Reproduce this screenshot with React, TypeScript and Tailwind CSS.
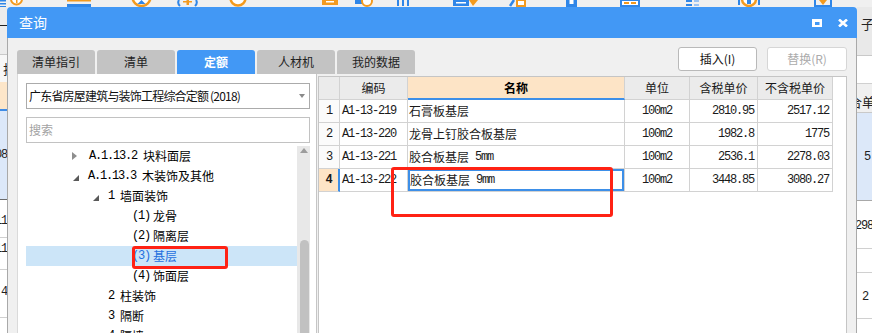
import React from "react";

const M = ({ children, className = "" }: { children: React.ReactNode; className?: string }) => (
  <span className={"font-['Liberation_Mono',monospace] tracking-[-1.2px] " + className}>{children}</span>
);

function Toolbar() {
  const o = "#f39a1e";
  const b = "#2f86e8";
  return (
    <div className="h-[7px] flex items-start overflow-hidden bg-[#f0f0f0]">
      <svg width="6" height="7">
        <rect x="0" y="0" width="6" height="1.5" fill={b} />
        <rect x="0" y="3" width="6" height="1.5" fill={b} />
        <rect x="0" y="6" width="6" height="1.5" fill={b} />
      </svg>
      <svg className="ml-[4px]" width="13" height="7">
        <circle cx="6.5" cy="-1" r="5.5" fill="#fff" stroke={o} strokeWidth="2" />
        <rect x="6" y="0" width="1.5" height="3" fill={o} />
      </svg>
      <svg className="ml-[44px]" width="24" height="7">
        <rect x="0" y="0" width="24" height="1.5" fill={o} />
        <rect x="0" y="4" width="24" height="3" fill={b} />
      </svg>
      <svg className="ml-[39px]" width="23" height="7">
        <circle cx="11.5" cy="-3" r="9" fill="#fff" stroke={o} strokeWidth="2.5" />
        <path d="M7.5 4 L11.5 0 L15.5 4 Z" fill={b} />
      </svg>
      <svg className="ml-[23px]" width="23" height="7">
        <path d="M3 0 Q1 3 4 6" stroke={b} strokeWidth="2" fill="none" />
        <path d="M20 0 Q22 3 19 6" stroke={b} strokeWidth="2" fill="none" />
        <rect x="10.5" y="0" width="2.5" height="5" fill={o} />
        <rect x="7" y="1" width="9" height="1.5" fill={o} />
      </svg>
      <svg className="ml-[29px]" width="20" height="7">
        <circle cx="10" cy="-2" r="7.5" fill="#fff" stroke={o} strokeWidth="2.5" />
      </svg>
      <svg className="ml-[72px]" width="20" height="7">
        <rect x="2" y="0" width="16" height="5" fill={o} />
        <rect x="6" y="1" width="8" height="1.5" fill="#fff" />
      </svg>
      <svg className="ml-[15px]" width="20" height="7">
        <rect x="0" y="0" width="8" height="4" fill={b} />
        <circle cx="12" cy="1" r="5" fill="#fff" stroke={o} strokeWidth="2" />
      </svg>
      <svg className="ml-[20px]" width="17" height="7">
        <rect x="2" y="0" width="2" height="6" fill={b} />
        <rect x="7" y="0" width="2" height="6" fill={b} />
        <rect x="12" y="0" width="2" height="6" fill={b} />
      </svg>
      <svg className="ml-[41px]" width="25" height="7">
        <rect x="0" y="0" width="16" height="6" fill={b} />
        <rect x="3" y="2" width="10" height="1.5" fill="#fff" />
        <path d="M16 0 L25 0 L20 6 Z" fill={o} />
      </svg>
      <svg className="ml-[30px]" width="19" height="7">
        <path d="M2 6 L6 0" stroke={b} strokeWidth="2.5" />
        <rect x="9" y="0" width="8" height="6" fill="#fff" stroke={o} strokeWidth="2" />
      </svg>
      <svg className="ml-[38px]" width="13" height="7">
        <rect x="1" y="0" width="11" height="7" fill={b} />
        <rect x="4.5" y="0" width="4" height="4" fill="#fff" />
      </svg>
      <svg className="ml-[42px]" width="20" height="7">
        <rect x="1" y="0" width="18" height="6" fill="#fff" stroke={b} strokeWidth="2" />
        <rect x="4" y="2" width="5" height="2" fill={o} />
        <rect x="11" y="2" width="5" height="2" fill={o} />
      </svg>
      <svg className="ml-[45px]" width="15" height="7">
        <rect x="1" y="0" width="6" height="2" fill={b} />
        <rect x="1" y="4" width="6" height="2" fill={b} />
        <rect x="9" y="0" width="5" height="2" fill="#9cc3f2" />
        <rect x="9" y="4" width="5" height="2" fill="#9cc3f2" />
      </svg>
      <svg className="ml-[38px]" width="22" height="7">
        <circle cx="11" cy="-1" r="7" fill="#fff" stroke={o} strokeWidth="2.5" />
        <rect x="9" y="0" width="4" height="4" fill={b} />
        <rect x="0" y="0" width="2" height="5" fill={b} />
        <rect x="20" y="0" width="2" height="5" fill={b} />
      </svg>
      <svg className="ml-[53px]" width="20" height="7">
        <path d="M2 0 L2 6 L18 6 L18 0" stroke={b} strokeWidth="2" fill="none" />
        <path d="M6 0 L10 5 L14 0 Z" fill={o} />
      </svg>
    </div>
  );
}

function LeftStrip() {
  return (
    <div className="w-[7px] flex flex-col overflow-hidden text-[13px] leading-[16px] text-[#222]">
      <div className="h-[48px] shrink-0 bg-[#ececec] border-b border-[#c9c9c9] pt-[10px] flex">
        <span className="ml-[-3px]">一</span>
      </div>
      <div className="h-[27px] shrink-0 bg-[#f7f7f7] flex items-center">
        <span className="ml-[3px]">折</span>
      </div>
      <div className="h-[27px] shrink-0 bg-[#fde6c9]" />
      <div className="h-[2px] shrink-0 bg-[#3f8ce6]" />
      <div className="h-[89px] shrink-0 bg-[#dce8f9] border-b border-[#6b6b6b] flex items-center justify-end whitespace-nowrap">
        <M className="text-[12px] leading-[14px]">1308</M>
      </div>
      <div className="h-[38px] shrink-0 bg-white border-b border-[#d0d0d0] flex justify-end pt-[14px] whitespace-nowrap">
        <M className="text-[12px] leading-[14px]">11</M>
      </div>
      <div className="h-[32px] shrink-0 bg-white border-b border-[#d0d0d0] flex justify-end pt-[4px] whitespace-nowrap">
        <M className="text-[12px] leading-[14px]">11</M>
      </div>
      <div className="h-[48px] shrink-0 bg-white border-b border-[#d0d0d0] flex justify-end pt-[15px] whitespace-nowrap">
        <M className="text-[12px] leading-[14px]">4</M>
      </div>
      <div className="flex-1 bg-white" />
    </div>
  );
}

function RightStrip() {
  return (
    <div className="w-[15px] flex flex-col overflow-hidden text-[13px] leading-[16px] text-[#222]">
      <div className="h-[49px] shrink-0 bg-[#e9e9e9] border-b border-[#c9c9c9] pt-[9px] pl-[4px]">子</div>
      <div className="h-[28px] shrink-0 bg-white border-b border-[#d0d0d0]" />
      <div className="h-[29px] shrink-0 bg-[#f0f0f0] border-b border-[#c9c9c9] pt-[10px] flex whitespace-nowrap">
        <span className="ml-[-8px]">合单</span>
      </div>
      <div className="h-[88px] shrink-0 bg-[#dce8f9] border-b border-[#a8a8a8] flex items-center pl-[7px]">
        <M className="text-[12px] leading-[14px]">5</M>
      </div>
      <div className="h-[48px] shrink-0 bg-white border-b border-[#d0d0d0] flex pt-[18px] whitespace-nowrap">
        <M className="text-[12px] leading-[14px] ml-[-2px]">298</M>
      </div>
      <div className="h-[24px] shrink-0 bg-white border-b border-[#d0d0d0]" />
      <div className="h-[46px] shrink-0 bg-white border-b border-[#d0d0d0] pt-[14px] pl-[5px]">
        <M className="text-[12px] leading-[14px]">2</M>
      </div>
      <div className="flex-1 bg-white" />
    </div>
  );
}

type TreeRow = { pl: string; arrow?: "right" | "down"; num: string; text: string; gap: string; sel?: boolean };

const tree: TreeRow[] = [
  { pl: "pl-[47px]", arrow: "right", num: "A.1.13.2", text: "块料面层", gap: "gap-[6px]" },
  { pl: "pl-[47px]", arrow: "down", num: "A.1.13.3", text: "木装饰及其他", gap: "gap-[6px]" },
  { pl: "pl-[67px]", arrow: "down", num: "1", text: "墙面装饰", gap: "gap-[6px]" },
  { pl: "pl-[106px]", num: "(1)", text: "龙骨", gap: "gap-[3px]" },
  { pl: "pl-[106px]", num: "(2)", text: "隔离层", gap: "gap-[3px]" },
  { pl: "pl-[106px]", num: "(3)", text: "基层", gap: "gap-[3px]", sel: true },
  { pl: "pl-[106px]", num: "(4)", text: "饰面层", gap: "gap-[3px]" },
  { pl: "pl-[82px]", num: "2", text: "柱装饰", gap: "gap-[6px]" },
  { pl: "pl-[82px]", num: "3", text: "隔断", gap: "gap-[6px]" },
  { pl: "pl-[82px]", num: "4", text: "隔墙", gap: "gap-[6px]" },
];

function Arrow({ dir }: { dir: "right" | "down" }) {
  if (dir === "right")
    return (
      <svg width="5" height="8" className="ml-[-1px]">
        <path d="M0 0 L5 4 L0 8 Z" fill="#8e8e8e" />
      </svg>
    );
  return (
    <svg width="6" height="6" className="mt-[4px]">
      <path d="M6 0 L6 6 L0 6 Z" fill="#595959" />
    </svg>
  );
}

function LeftPanel() {
  return (
    <div className="relative w-[300px] shrink-0 bg-white border-l border-[#dadada] border-r border-r-[#c5c5c5] pl-[8px] pt-[9px]">
      <div className="w-[284px] h-[26px] border border-[#ababab] flex items-center justify-between pl-[2px] pr-[4px]">
        <span className="text-[12px] tracking-[-0.8px] text-[#111] whitespace-nowrap">广东省房屋建筑与装饰工程综合定额 (2018)</span>
        <svg width="6" height="4">
          <path d="M0 0 L6 0 L3 4 Z" fill="#8a8a8a" />
        </svg>
      </div>
      <div className="mt-[8px] w-[284px] h-[26px] border border-[#c2c2c2] flex items-center pl-[2px]">
        <span className="text-[12px] text-[#a3a3a3]">搜索</span>
      </div>
      <div className="mt-[3px] w-[284px] flex">
        <div className="w-[271px] flex flex-col">
          {tree.map((r, i) => (
            <div key={i} className={"h-[20px] flex items-center " + r.pl + (r.sel ? " bg-[#cce5f8]" : "")}>
              {r.arrow && (
                <div className={(r.arrow === "right" ? "w-[16px]" : "w-[15px]") + " flex items-center"}>
                  <Arrow dir={r.arrow} />
                </div>
              )}
              <div className={"flex items-center text-[12px] leading-[14px] " + r.gap + (r.sel ? " text-[#1f6fde]" : " text-black")}>
                <M>{r.num}</M>
                <span>{r.text}</span>
              </div>
            </div>
          ))}
        </div>
        <div className="w-[13px] h-[200px] bg-[#e8e8e8] flex flex-col items-center">
          <svg width="8" height="5" className="mt-[2px] ml-[1px]">
            <path d="M0 5 L4 0 L8 5 Z" fill="#9c9c9c" />
          </svg>
          <div className="mt-[87px] ml-[1px] w-[9px] flex-1 bg-[#c1c1c1] rounded-t-[5px]" />
        </div>
      </div>
      <div className="absolute left-[114px] top-[172px] w-[96px] h-[23px] border-[3px] border-[#ff2214] rounded-[3px]" />
    </div>
  );
}

type Row = { n: string; code: string; name: string; mm?: string; unit: string; p1: string; p2: string; sel?: boolean };
const rows: Row[] = [
  { n: "1", code: "A1-13-219", name: "石膏板基层", unit: "100m2", p1: "2810.95", p2: "2517.12" },
  { n: "2", code: "A1-13-220", name: "龙骨上钉胶合板基层", unit: "100m2", p1: "1982.8", p2: "1775" },
  { n: "3", code: "A1-13-221", name: "胶合板基层", mm: "5mm", unit: "100m2", p1: "2536.1", p2: "2278.03" },
  { n: "4", code: "A1-13-222", name: "胶合板基层", mm: "9mm", unit: "100m2", p1: "3448.85", p2: "3080.27", sel: true },
];

function RightPanel() {
  const cell = "h-[23px] border-r border-b border-[#d2d2d2] flex items-center text-[12px] leading-[14px] overflow-hidden whitespace-nowrap";
  return (
    <div className="relative flex-1 mt-[2px] bg-white border border-[#c5c5c5]">
      <div className="grid grid-cols-[21px_68px_217px_65px_68px_75px] w-[514px] text-[#1a1a1a]">
        <div className={cell + " bg-[#ebebeb]"} />
        <div className={cell + " bg-[#ebebeb] justify-center"}>编码</div>
        <div className={cell + " bg-[#fde4c6] justify-center font-bold text-black border-b-2 border-b-[#3d8fe8]"}>名称</div>
        <div className={cell + " bg-[#ebebeb] justify-center"}>单位</div>
        <div className={cell + " bg-[#ebebeb] justify-center"}>含税单价</div>
        <div className={cell + " bg-[#ebebeb] justify-center"}>不含税单价</div>
        {rows.map((r) => (
          <React.Fragment key={r.n}>
            <div className={cell + " justify-center " + (r.sel ? "bg-[#fde4c6] font-bold border-r-2 border-r-[#3d8fe8]" : "bg-[#fbfbfb]")}>
              <M>{r.n}</M>
            </div>
            <div className={cell + " pl-[2px]"}>
              <M>{r.code}</M>
            </div>
            <div className={cell + " pl-[1px] " + (r.sel ? "shadow-[inset_0_0_0_2px_#3d8fe8] pl-[2px]" : "")}>
              <span>{r.name}</span>
              {r.mm && <M className="ml-[6px]">{r.mm}</M>}
            </div>
            <div className={cell + " justify-center"}>
              <M>{r.unit}</M>
            </div>
            <div className={cell + " justify-end pr-[3px]"}>
              <M>{r.p1}</M>
            </div>
            <div className={cell + " justify-end pr-[3px]"}>
              <M>{r.p2}</M>
            </div>
          </React.Fragment>
        ))}
      </div>
      <div className="absolute left-[72px] top-[90px] w-[222px] h-[50px] border-[3px] border-[#ff2214] rounded-[3px]" />
    </div>
  );
}

function Dialog() {
  const tabs = ["清单指引", "清单", "定额", "人材机", "我的数据"];
  return (
    <div className="w-[850px] shrink-0 flex flex-col">
      <div className="h-[31px] shrink-0 bg-[#4298f5] rounded-t-[4px] flex items-center justify-between pl-[12px] pr-[9px]">
        <span className="text-[14px] text-white">查询</span>
        <div className="flex items-center gap-[16px]">
          <svg width="10" height="8">
            <path d="M0 0 H10 V8 H0 Z M3 3 V6 H7.5 V3 Z" fill="#fff" fillRule="evenodd" />
          </svg>
          <svg width="10" height="8">
            <path d="M1 0.5 L9 7.5 M9 0.5 L1 7.5" stroke="#fff" strokeWidth="2.6" />
          </svg>
        </div>
      </div>
      <div className="flex-1 flex flex-col bg-[#f0f0f0] border-x border-[#a9a9a9]">
        <div className="flex items-start justify-between pt-[9px] pl-[9px] pr-[9px]">
          <div className="flex gap-[2px] mt-[3px]">
            {tabs.map((t) => (
              <div
                key={t}
                className={
                  "w-[78px] h-[24px] rounded-t-[3px] flex items-center justify-center text-[12px] " +
                  (t === "定额" ? "bg-[#4298f5] text-white font-bold" : "bg-[#c3c3c3] text-[#222]")
                }
              >
                {t}
              </div>
            ))}
          </div>
          <div className="flex gap-[10px]">
            <div className="w-[79px] h-[24px] bg-white border border-[#b9b9b9] rounded-[3px] flex items-center justify-center text-[12px] text-[#111]">
              插入(I)
            </div>
            <div className="w-[80px] h-[24px] bg-white border border-[#d6d6d6] rounded-[3px] flex items-center justify-center text-[12px] text-[#ababab]">
              替换(R)
            </div>
          </div>
        </div>
        <div className="flex-1 flex gap-[1px] pl-[9px] pr-[9px]">
          <LeftPanel />
          <RightPanel />
        </div>
      </div>
    </div>
  );
}

export default function App() {
  return (
    <div className="w-[872px] h-[333px] overflow-hidden bg-[#f0f0f0] flex flex-col font-['Noto_Sans_CJK_SC','Noto_Sans',sans-serif]">
      <Toolbar />
      <div className="flex-1 flex min-h-0">
        <LeftStrip />
        <Dialog />
        <RightStrip />
      </div>
    </div>
  );
}
